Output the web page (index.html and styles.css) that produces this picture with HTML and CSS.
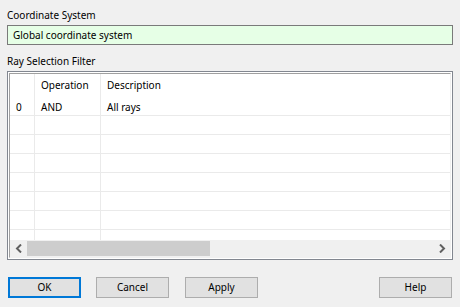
FILE: index.html
```html
<!DOCTYPE html>
<html>
	<head>
		<meta charset="utf-8" />
		<title>Ray Selection</title>
		<link rel="stylesheet" href="styles.css">
	</head>
	<body>
		<div class="dialog">
			<div class="label">Coordinate System</div>
			<div class="field">Global coordinate system</div>
			<div class="label second">Ray Selection Filter</div>
			<div class="frame">
				<div class="inner">
					<div class="grid">
						<div class="row head">
							<div class="cell num"></div>
							<div class="cell op">Operation</div>
							<div class="cell desc">Description</div>
						</div>
						<div class="row">
							<div class="cell num">0</div>
							<div class="cell op">AND</div>
							<div class="cell desc">All rays</div>
						</div>
						<div class="row"><div class="cell num"></div><div class="cell op"></div><div class="cell desc"></div></div>
						<div class="row"><div class="cell num"></div><div class="cell op"></div><div class="cell desc"></div></div>
						<div class="row"><div class="cell num"></div><div class="cell op"></div><div class="cell desc"></div></div>
						<div class="row"><div class="cell num"></div><div class="cell op"></div><div class="cell desc"></div></div>
						<div class="row"><div class="cell num"></div><div class="cell op"></div><div class="cell desc"></div></div>
						<div class="row"><div class="cell num"></div><div class="cell op"></div><div class="cell desc"></div></div>
						<div class="row"><div class="cell num"></div><div class="cell op"></div><div class="cell desc"></div></div>
					</div>
					<div class="hscroll">
						<span class="arrow">
							<svg width="8" height="9" viewBox="0 0 8 9"><path d="M6 0.5 L2 4.5 L6 8.5" fill="none" stroke="#606060" stroke-width="2"/></svg>
						</span>
						<div class="track"><div class="thumb"></div></div>
						<span class="arrow">
							<svg width="8" height="9" viewBox="0 0 8 9"><path d="M2 0.5 L6 4.5 L2 8.5" fill="none" stroke="#606060" stroke-width="2"/></svg>
						</span>
					</div>
				</div>
			</div>
			<div class="buttons">
				<a href="#" class="btn default">OK</a>
				<a href="#" class="btn">Cancel</a>
				<a href="#" class="btn">Apply</a>
				<span class="spacer"></span>
				<a href="#" class="btn">Help</a>
			</div>
		</div>
	</body>
</html>
```

FILE: styles.css
```css
* {
	margin: 0;
	padding: 0;
	box-sizing: border-box;
}

a {
	text-decoration: none;
	color: #000;
}

body {
	background: #f0f0f0;
	font-family: "Noto Sans", "Open Sans", sans-serif;
	font-size: 10px;
	color: #000;
}

.dialog {
	width: 460px;
	height: 307px;
	padding: 6px 7px 0 7px;
	display: flex;
	flex-direction: column;
}

.label {
	height: 18px;
	line-height: 18px;
	margin-bottom: 1px;
}

.label.second {
	margin-top: 7px;
	margin-bottom: 1px;
}

.field {
	height: 20px;
	line-height: 18px;
	border: 1px solid #7a7a7a;
	background: #e6ffe6;
	padding-left: 5px;
}

.frame {
	height: 189px;
	border: 1px solid #828790;
	padding: 1px;
	background: #fff;
}

.inner {
	height: 100%;
	border: 1px solid #a0a0a0;
	border-bottom-color: #f0f0f0;
	border-right-color: #f0f0f0;
	display: flex;
	flex-direction: column;
	background: #fff;
}

.grid {
	flex: 1;
	overflow: hidden;
}

.row {
	display: flex;
	height: 19px;
	border-bottom: 1px solid #eaeaea;
}

.row.head {
	height: 23px;
	border-bottom: none;
}

.cell {
	line-height: 18px;
	padding: 1px 0 0 6px;
	border-right: 1px solid #eaeaea;
	white-space: nowrap;
}

.row.head .cell {
	line-height: 23px;
	padding-top: 0;
}

.num {
	width: 25px;
}

.op {
	width: 66px;
}

.desc {
	flex: 1;
	border-right: none;
}

.hscroll {
	height: 17px;
	display: flex;
	background: #f0f0f0;
}

.arrow {
	width: 17px;
	display: flex;
	align-items: center;
	justify-content: center;
}

.track {
	flex: 1;
	padding: 1px 0;
}

.thumb {
	width: 183px;
	height: 100%;
	background: #cdcdcd;
}

.buttons {
	display: flex;
	margin-top: 17px;
	padding-left: 1px;
}

.btn {
	width: 73px;
	height: 21px;
	line-height: 19px;
	text-align: center;
	background: #e1e1e1;
	border: 1px solid #adadad;
	margin-right: 15px;
}

.btn:nth-child(2) {
	margin-right: 16px;
}

.btn.default {
	border: 2px solid #0078d7;
	line-height: 17px;
}

.spacer {
	flex: 1;
}

.btn:last-child {
	margin-right: 1px;
}
```
